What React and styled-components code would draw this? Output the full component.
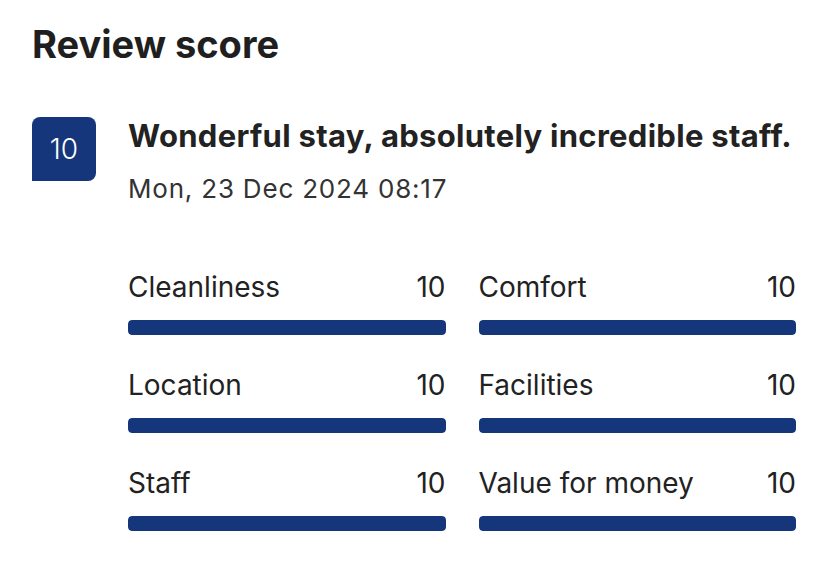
import React from 'react'
import styled, { createGlobalStyle } from 'styled-components'

const GlobalStyle = createGlobalStyle`
  body {
    margin: 0;
    background: #ffffff;
    font-family: Inter, "Liberation Sans", Arial, sans-serif;
    color: #222222;
  }
`

const scores = [
    { label: 'Cleanliness', value: 10 },
    { label: 'Comfort', value: 10 },
    { label: 'Location', value: 10 },
    { label: 'Facilities', value: 10 },
    { label: 'Staff', value: 10 },
    { label: 'Value for money', value: 10 },
]

const ScoreBar = ({ label, value }) => (
    <Category>
        <CategoryHead>
            <span>{label}</span>
            <span>{value}</span>
        </CategoryHead>
        <Track>
            <Fill style={{ width: `${value * 10}%` }} />
        </Track>
    </Category>
)

const App = () => {
    return (
        <Page>
            <GlobalStyle />
            <Title>Review score</Title>
            <Review>
                <Badge>10</Badge>
                <Body>
                    <Headline>Wonderful stay, absolutely incredible staff.</Headline>
                    <Date>Mon, 23 Dec 2024 08:17</Date>
                    <Grid>
                        {scores.map((s) => (
                            <ScoreBar key={s.label} label={s.label} value={s.value} />
                        ))}
                    </Grid>
                </Body>
            </Review>
        </Page>
    )
}

export default App

const Page = styled.div`
    padding: 22px 32px 40px 32px;
    width: 828px;
    box-sizing: border-box;
`

const Title = styled.h2`
    margin: 0;
    font-size: 38px;
    font-weight: 700;
    line-height: 44px;
    color: #1f1f1f;
`

const Review = styled.div`
    display: flex;
    gap: 32px;
    margin-top: 51px;
`

const Badge = styled.div`
    flex: 0 0 64px;
    height: 64px;
    display: flex;
    align-items: center;
    justify-content: center;
    background: #16367c;
    color: #ffffff;
    font-size: 28px;
    font-weight: 300;
    border-radius: 8px 8px 8px 0;
`

const Body = styled.div`
    flex: 1;
    min-width: 0;
`

const Headline = styled.div`
    font-size: 31px;
    font-weight: 700;
    line-height: 38px;
    letter-spacing: 0.3px;
    color: #222222;
    white-space: nowrap;
`

const Date = styled.div`
    font-size: 26px;
    line-height: 34px;
    letter-spacing: 0.8px;
    color: #333333;
    margin-top: 17px;
`

const Grid = styled.div`
    display: grid;
    grid-template-columns: 1fr 1fr;
    column-gap: 33px;
    row-gap: 33px;
    margin-top: 64px;
`

const Category = styled.div`
    display: flex;
    flex-direction: column;
    gap: 16px;
`

const CategoryHead = styled.div`
    display: flex;
    justify-content: space-between;
    font-size: 28px;
    line-height: 34px;
    color: #222222;
`

const Track = styled.div`
    height: 15px;
    border-radius: 4px;
    background: #e6e6e6;
    overflow: hidden;
`

const Fill = styled.div`
    height: 100%;
    background: #16367c;
    border-radius: 4px;
`
